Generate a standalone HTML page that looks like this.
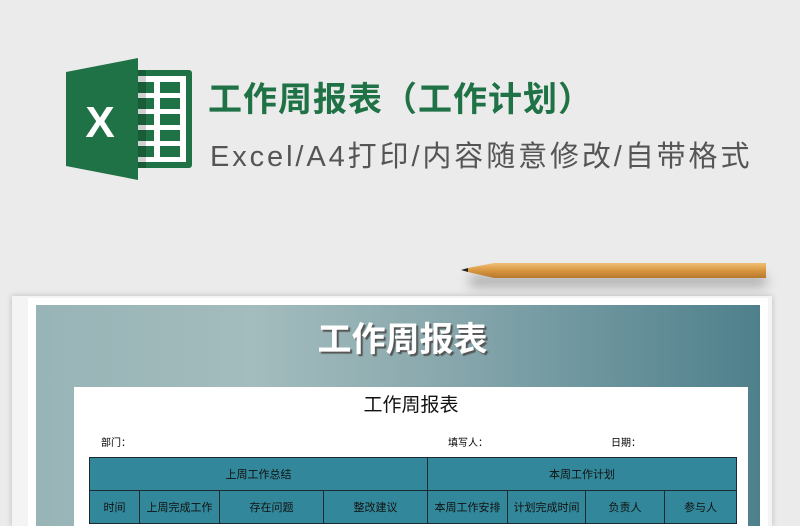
<!DOCTYPE html>
<html style="width:800px;height:526px;overflow:hidden"><head><meta charset="utf-8"><style>
*{margin:0;padding:0;box-sizing:border-box}
body{width:800px;height:526px;overflow:hidden;background:#ebebeb;position:relative;font-family:"Liberation Sans","Noto Sans CJK SC",sans-serif}
.abs{position:absolute}
.t1{left:208px;top:72px;font-size:34px;font-weight:bold;color:#1f7245;letter-spacing:1px;white-space:nowrap}
.t2{left:210px;top:133px;font-size:29px;color:#555;white-space:nowrap;letter-spacing:2.9px}
.clip{position:absolute;left:0;top:0;width:800px;height:526px;overflow:hidden}
table{border-collapse:collapse;position:absolute;left:89px;top:457px;width:648px;font-size:11px;color:#111}
td{background:#32889a;border:1px solid #1a2a30;text-align:center;height:33px}
</style></head><body>
<div class="clip">
<svg class="abs" style="left:66px;top:58px" width="130" height="122" viewBox="0 0 130 122">
<rect x="62" y="12" width="64" height="98" rx="3" fill="#1f7245"/>
<rect x="68" y="18" width="52" height="86" fill="#fff"/>
<g fill="#1f7245">
<rect x="70" y="24" width="18" height="11"/><rect x="94" y="24" width="20" height="11"/>
<rect x="70" y="40" width="18" height="11"/><rect x="94" y="40" width="20" height="11"/>
<rect x="70" y="56" width="18" height="11"/><rect x="94" y="56" width="20" height="11"/>
<rect x="70" y="72" width="18" height="11"/><rect x="94" y="72" width="20" height="11"/>
<rect x="70" y="88" width="18" height="11"/><rect x="94" y="88" width="20" height="11"/>
</g>
<rect x="62" y="12" width="18" height="98" fill="#000" opacity=".18"/>
<path d="M0 14 L72 0 L72 122 L0 108 Z" fill="#1f7245"/>
<text x="34" y="79" font-size="44" font-weight="bold" fill="#fff" text-anchor="middle" font-family="Liberation Sans">X</text>
</svg>
<div class="abs t1">工作周报表（工作计划）</div>
<div class="abs t2">Excel/A4打印/内容随意修改/自带格式</div>
<div class="abs" style="left:470px;top:276px;width:296px;height:10px;background:#555;filter:blur(6px);opacity:.5"></div>
<svg class="abs" style="left:456px;top:260px" width="312" height="22">
<defs><linearGradient id="pg" x1="0" y1="0" x2="0" y2="1"><stop offset="0" stop-color="#f0c078"/><stop offset=".5" stop-color="#d8963e"/><stop offset="1" stop-color="#b87830"/></linearGradient></defs>
<path d="M5 10 L12 8 L12 12 Z" fill="#222"/>
<path d="M12 8 L38 3 L310 3 L310 18 L38 18 L12 12 Z" fill="url(#pg)"/>
</svg>
<div class="abs" style="left:12px;top:296px;width:760px;height:230px;background:#f4f4f4;box-shadow:0 0 6px rgba(0,0,0,.2)"></div>
<div class="abs" style="left:28px;top:298px;width:740px;height:228px;background:#fff"></div>
<div class="abs" style="left:36px;top:305px;width:724px;height:221px;background:linear-gradient(90deg,#98b4b6 0%,#a3bcbd 30%,#8aa9ae 55%,#4e808c 100%)"></div>
<div class="abs" style="left:0;top:312px;width:800px;text-align:center;padding-left:5px;font-size:34px;font-weight:bold;color:#fff;text-shadow:2px 2px 1px #555">工作周报表</div>
<div class="abs" style="left:74px;top:387px;width:674px;height:139px;background:#fff;overflow:hidden"></div>
<div class="abs" style="left:74px;top:390px;width:674px;text-align:center;font-size:19px;color:#111">工作周报表</div>
<div class="abs" style="left:101px;top:434px;font-size:10px">部门：</div>
<div class="abs" style="left:448px;top:434px;font-size:10px">填写人：</div>
<div class="abs" style="left:611px;top:434px;font-size:10px">日期：</div>
<div class="abs" style="left:0;top:0;width:800px;height:526px;overflow:hidden">
<table>
<tr><td colspan="4">上周工作总结</td><td colspan="4">本周工作计划</td></tr>
<tr><td style="width:50px">时间</td><td style="width:80px">上周完成工作</td><td style="width:104px">存在问题</td><td style="width:104px">整改建议</td><td style="width:80px">本周工作安排</td><td style="width:78px">计划完成时间</td><td style="width:79px">负责人</td><td>参与人</td></tr>
</table>
</div>
</div>
</body></html>
